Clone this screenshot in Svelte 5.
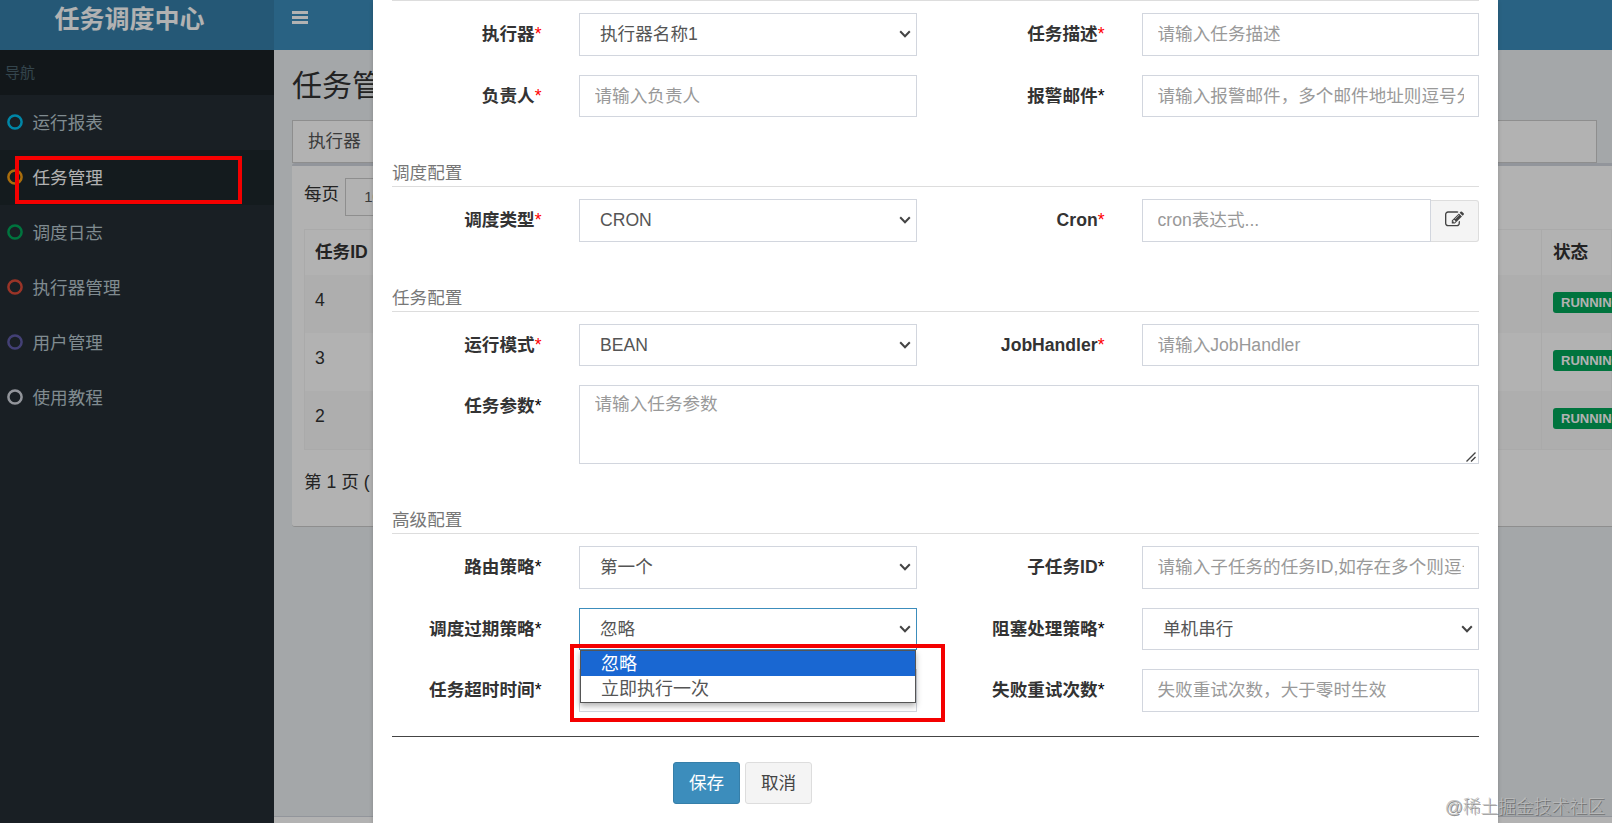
<script>
  const menu = [
    { text: '运行报表', color: '#00c0ef' },
    { text: '任务管理', color: '#f39c12', active: true },
    { text: '调度日志', color: '#00a65a' },
    { text: '执行器管理', color: '#dd4b39' },
    { text: '用户管理', color: '#605ca8' },
    { text: '使用教程', color: '#d2d6de' }
  ]

  const jobs = [4, 3, 2]

  const sections = [
    {
      title: '',
      fields: [
        { label: '执行器', required: true, type: 'select', value: '执行器名称1' },
        { label: '任务描述', required: true, placeholder: '请输入任务描述' },
        { label: '负责人', required: true, placeholder: '请输入负责人' },
        { label: '报警邮件', placeholder: '请输入报警邮件，多个邮件地址则逗号分隔' }
      ]
    },
    {
      title: '调度配置',
      fields: [
        { label: '调度类型', required: true, type: 'select', value: 'CRON' },
        { label: 'Cron', required: true, type: 'cron', placeholder: 'cron表达式...' }
      ]
    },
    {
      title: '任务配置',
      fields: [
        { label: '运行模式', required: true, type: 'select', value: 'BEAN' },
        { label: 'JobHandler', required: true, placeholder: '请输入JobHandler' },
        { label: '任务参数', type: 'textarea', placeholder: '请输入任务参数' }
      ]
    },
    {
      title: '高级配置',
      fields: [
        { label: '路由策略', type: 'select', value: '第一个' },
        { label: '子任务ID', placeholder: '请输入子任务的任务ID,如存在多个则逗号分隔' },
        { label: '调度过期策略', type: 'select', value: '忽略', options: ['忽略', '立即执行一次'] },
        { label: '阻塞处理策略', type: 'select', value: '单机串行' },
        { label: '任务超时时间', placeholder: '' },
        { label: '失败重试次数', placeholder: '失败重试次数，大于零时生效' }
      ]
    }
  ]
</script>

<div class="page">
  <aside class="sidebar">
    <div class="logo">任务调度中心</div>
    <div class="nav-header">导航</div>
    <nav>
      {#each menu as item}
        <a class="nav-item" class:active={item.active} href="#top">
          <svg width="16" height="16" viewBox="0 0 16 16">
            <circle cx="8" cy="8" r="6.6" fill="none" stroke={item.color} stroke-width="2.5" />
          </svg>
          <span>{item.text}</span>
        </a>
      {/each}
    </nav>
  </aside>

  <main class="main">
    <header class="navbar">
      <svg width="16" height="14" viewBox="0 0 16 14" fill="#fff">
        <rect width="16" height="3" />
        <rect y="5" width="16" height="3" />
        <rect y="10" width="16" height="3" />
      </svg>
    </header>
    <div class="content">
      <h1>任务管理</h1>
      <div class="filter">执行器</div>
      <div class="box">
        <div class="length">每页 <span class="length-select">10</span></div>
        <div class="table">
          <div class="tr th"><span>任务ID</span><span class="status">状态</span></div>
          {#each jobs as id, i}
            <div class="tr" class:odd={i % 2 === 0}>
              <span>{id}</span>
              <span class="status"><b class="badge">RUNNING</b></span>
            </div>
          {/each}
        </div>
        <div class="info">第 1 页 (</div>
      </div>
    </div>
    <footer></footer>
  </main>

  <div class="mark mark-menu"></div>

  <div class="backdrop">
    <div class="modal" role="dialog">
      {#each sections as section}
        <div class="legend" class:first={!section.title}>{section.title}</div>
        <div class="fields">
          {#each section.fields as field}
            <div class="label">{field.label}<span class:red={field.required}>*</span></div>
            {#if field.type === 'select'}
              <div class="control select" class:focus={field.options}>
                <span class="text">{field.value}</span>
                <svg class="chevron" width="12" height="8" viewBox="0 0 12 8">
                  <path d="M1.2 1.2L6 6.2L10.8 1.2" fill="none" stroke="#444" stroke-width="2" />
                </svg>
                {#if field.options}
                  <div class="dropdown">
                    {#each field.options as option, i}
                      <div class="option" class:selected={i === 0}>{option}</div>
                    {/each}
                  </div>
                {/if}
              </div>
            {:else if field.type === 'textarea'}
              <div class="control textarea">
                <span class="text">{field.placeholder}</span>
                <svg class="grip" width="10" height="10" viewBox="0 0 10 10">
                  <path d="M0.5 9.5L9.5 0.5M5 9.5L9.5 5" stroke="#444" stroke-width="1.4" />
                </svg>
              </div>
            {:else if field.type === 'cron'}
              <div class="group">
                <div class="control"><span class="text">{field.placeholder}</span></div>
                <button class="addon" aria-label="Cron">
                  <svg width="19" height="19" viewBox="0 0 1792 1792" fill="#444">
                    <path d="M888 1184l116-116-152-152-116 116v56h96v96h56zm440-720q-16-16-33 1l-350 350q-17 17-1 33t33-1l350-350q17-17 1-33zm80 594v190q0 119-84.5 203.5t-203.5 84.5h-832q-119 0-203.5-84.5t-84.5-203.5v-832q0-119 84.5-203.5t203.5-84.5h832q63 0 117 25 15 7 18 23 3 17-9 29l-49 49q-14 14-32 8-23-6-45-6h-832q-66 0-113 47t-47 113v832q0 66 47 113t113 47h832q66 0 113-47t47-113v-126q0-13 9-22l64-64q15-15 35-7t20 29zm-96-738l288 288-672 672h-288v-288zm444 132l-92 92-288-288 92-92q28-28 68-28t68 28l152 152q28 28 28 68t-28 68z" />
                  </svg>
                </button>
              </div>
            {:else}
              <div class="control"><span class="text">{field.placeholder}</span></div>
            {/if}
          {/each}
        </div>
      {/each}
      <div class="actions">
        <button class="btn primary">保存</button>
        <button class="btn">取消</button>
      </div>
    </div>
  </div>

  <div class="mark mark-options"></div>
  <div class="watermark">@稀土掘金技术社区</div>
</div>

<style>
  :global(body) { margin: 0; overflow: hidden; }

  .page {
    position: relative;
    display: flex;
    width: 1612px; height: 823px;
    overflow: hidden;
    font-family: "Liberation Sans", "Noto Sans CJK SC", sans-serif;
    font-size: 17.6px;
    color: #333;
  }
  .page :global(*) { box-sizing: border-box; }

  .sidebar { width: 274px; background: #242d34; flex: none; }
  .logo {
    height: 50px; padding: 0 15px 12px 0;
    background: #367fa9; color: #fff;
    font-size: 25px; font-weight: 700; line-height: 38px;
    text-align: center;
  }
  .nav-header {
    height: 45px; padding-left: 5px;
    background: #1a2226; color: #4b646f;
    font-size: 15px; line-height: 45px;
  }
  .nav-item {
    display: flex; align-items: center; gap: 9.5px;
    height: 55px; padding: 0 0 1px 7px;
    color: #b8c7ce; text-decoration: none;
  }
  .nav-item span { margin-top: -2px; }
  .nav-item.active { background: #1e282c; color: #fff; }

  .main {
    flex: 1; min-width: 0;
    display: flex; flex-direction: column;
    background: #ebf0f3;
  }
  .navbar { height: 50px; padding: 11px 18px; background: #3c8dbc; flex: none; }
  .navbar svg { display: block; }
  .content { flex: 1; padding-left: 18px; }
  h1 { margin: 0; height: 70px; font-size: 30px; font-weight: 400; line-height: 72px; }
  .filter {
    width: 1305px; height: 43px; padding-left: 15px;
    background: #fff; border: 1px solid #ccc; color: #555;
    line-height: 40px;
  }
  .box {
    height: 364px; padding: 12px 0 0 12px;
    background: #fff; border-top: 3px solid #d2d6de;
    border-bottom: 1px solid #ccc; border-radius: 3px 0 0 3px;
  }
  .length { display: flex; align-items: flex-start; gap: 6px; height: 38px; line-height: 33px; }
  .length-select {
    width: 90px; height: 38px; padding-left: 18px;
    border: 1px solid #ccc; font-size: 15px; line-height: 36px; color: #555;
  }
  .table { margin-top: 13px; border: 1px solid #f4f4f4; }
  .tr {
    display: flex; justify-content: space-between; align-items: flex-start;
    height: 58px; padding-left: 10px; line-height: 50px;
  }
  .tr.th { height: 45px; font-weight: 700; line-height: 45px; }
  .tr.odd { background: #f9f9f9; }
  .status { width: 70px; height: 100%; padding-left: 11px; border-left: 1px solid #f4f4f4; }
  .badge {
    display: block; width: 80px; height: 21px; margin-top: 17px; padding-left: 8px;
    background: #00a65a; border-radius: 3px; color: #fff;
    font-size: 13px; line-height: 21px;
  }
  .info { margin-top: 19px; line-height: 26px; }
  footer { height: 7px; background: #fff; border-top: 1px solid #d2d6de; flex: none; }

  .backdrop { position: absolute; inset: 0; padding-left: 373px; background: rgba(0,0,0,0.3); }
  .modal {
    width: 1125px; height: 823px; padding: 0 19px;
    background: #fff; box-shadow: 0 2px 4px rgba(0,0,0,0.2);
  }
  .legend {
    height: 70px; padding-top: 42px;
    border-bottom: 1px solid #ddd;
    color: #777; line-height: 28px;
  }
  .legend.first { height: 1px; padding: 0; }
  .fields {
    display: grid; grid-template-columns: 187px 338px 225px 337px;
    row-gap: 19px; padding-top: 12px;
  }
  .label {
    padding-right: 37.5px;
    font-weight: 700; line-height: 42px; text-align: right; white-space: nowrap;
  }
  .label span { color: #000; font-weight: 400; }
  .label span.red { color: #f00; }
  .control {
    display: flex; align-items: center; position: relative;
    height: 42.5px; min-width: 0; padding: 0 14.5px;
    border: 1px solid #d2d6de; color: #999; line-height: 40px;
  }
  .text { overflow: hidden; white-space: nowrap; flex: 1; min-width: 0; }
  .select { padding: 0 5px 0 20px; color: #555; }
  .select.focus { border-color: #3c8dbc; }
  .textarea {
    grid-column: 2 / 5; height: 79px;
    align-items: flex-start; line-height: 37px;
  }
  .grip { position: absolute; right: 2px; bottom: 1px; }
  .group { display: flex; align-items: flex-end; }
  .group .control { flex: 1; }
  .addon {
    display: flex; align-items: center; justify-content: center;
    width: 48px; height: 42px; padding: 0 0 3px;
    background: #f4f4f4; border: 1px solid #ddd; border-left: 0;
    border-radius: 0 3px 3px 0;
  }

  .dropdown {
    position: absolute; left: 0; right: 0; top: 41px; z-index: 2;
    height: 53px;
    background: #fff; border: 1px solid #555;
    box-shadow: 0 3px 6px rgba(0,0,0,0.3);
  }
  .option { height: 25.5px; padding-left: 20px; font-size: 18px; line-height: 27px; color: #555; }
  .option.selected { background: #1967d2; color: #fff; }

  .actions {
    display: flex; gap: 5px;
    margin-top: 24px; padding: 25px 0 0 281px;
    border-top: 1px solid #444;
  }
  .btn {
    width: 67px; height: 42px; padding: 0 0 2px;
    background: #f4f4f4; border: 1px solid #ddd; border-radius: 3px;
    font: inherit; color: #444;
  }
  .btn.primary { background: #3c8dbc; border-color: #367fa9; color: #fff; }

  /* red highlight frames */
  .mark { position: absolute; z-index: 3; border: 4px solid #f40000; }
  .mark-menu { left: 15px; top: 156px; width: 227px; height: 48px; }
  .mark-options { left: 570px; top: 644px; width: 375px; height: 78px; }

  .watermark {
    position: absolute; right: 7px; bottom: 4px; z-index: 4;
    font-size: 17.8px; line-height: 24px; font-weight: 300;
    color: rgba(190,190,190,0.9);
    text-shadow: 1px 1px 0 rgba(80,80,80,0.65);
  }
</style>
